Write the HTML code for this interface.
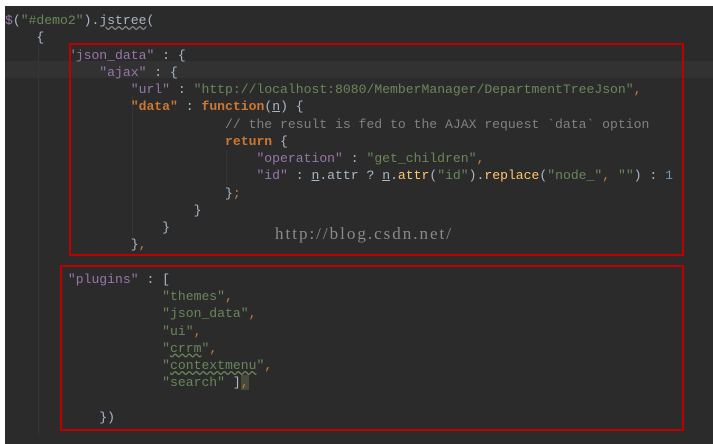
<!DOCTYPE html><html><head><style>
body{margin:0;width:713px;height:444px;background:#fff;overflow:hidden;position:relative}
#ed{position:absolute;left:5px;top:6px;width:708px;height:438px;background:#2b2b2b}
#hl{position:absolute;left:5px;top:61px;width:708px;height:17px;background:#323232}
pre{position:absolute;left:5px;top:12px;margin:0;font-family:"Liberation Mono",monospace;font-size:13.1px;line-height:17.25px;color:#a9b7c6}
.k{color:#9876aa}.s{color:#6a8759}.o{color:#cc7832}.b{color:#cc7832;font-weight:bold}.c{color:#808080}.n{color:#6897bb}
.u{text-decoration:underline}
.w{text-decoration:underline wavy #6a8759}
.box{position:absolute;border:2px solid #c00000;box-sizing:border-box}
.g{position:absolute;width:1px;background:#363636}
#wm{position:absolute;left:275px;top:224px;font-family:"Liberation Serif",serif;font-size:17px;letter-spacing:2px;color:#8a8a8a}
</style></head><body>
<div id="ed"></div><div id="hl"></div>
<div class="g" style="left:38px;top:45px;height:390px"></div>
<div class="g" style="left:132px;top:96px;height:140px"></div>
<div class="g" style="left:226px;top:150px;height:35px"></div>
<pre><span class="k">$</span>(<span class="s">"#demo2"</span>).<span class="w" style="text-decoration-color:#888">jstree</span>(
    {
        <span class="k">"json_data"</span> : {
            <span class="k">"ajax"</span> : {
                <span class="k">"url"</span> : <span class="s">"http://localhost:8080/MemberManager/DepartmentTreeJson"</span><span class="o">,</span>
                <span class="b">"data"</span> : <span class="b">function</span>(<span class="u">n</span>) {
                            <span class="c">// the result is fed to the AJAX request `data` option</span>
                            <span class="b">return</span> {
                                <span class="k">"operation"</span> : <span class="s">"get_children"</span><span class="o">,</span>
                                <span class="k">"id"</span> : <span class="u">n</span>.attr ? <span class="u">n</span>.<span style="color:#ffc66d">attr</span>(<span class="s">"id"</span>).<span style="color:#ffc66d">replace</span>(<span class="s">"node_"</span><span class="o">,</span> <span class="s">""</span>) : <span class="n">1</span>
                            }<span class="o">;</span>
                        }
                    }
                }<span class="o">,</span>

        <span class="k">"plugins"</span> : [
                    <span class="s">"themes"</span><span class="o">,</span>
                    <span class="s">"json_data"</span><span class="o">,</span>
                    <span class="s">"ui"</span><span class="o">,</span>
                    <span class="s">"<span class="w">crrm</span>"</span><span class="o">,</span>
                    <span class="s">"<span class="w">contextmenu</span>"</span><span class="o">,</span>
                    <span class="s">"search"</span> ]<span class="o" style="background:#4a4a3a">,</span>

            })</pre>
<div id="wm">http://blog.csdn.net/</div>
<div class="box" style="left:69px;top:43px;width:615px;height:213px"></div>
<div class="box" style="left:60px;top:265px;width:624px;height:166px"></div>
</body></html>
